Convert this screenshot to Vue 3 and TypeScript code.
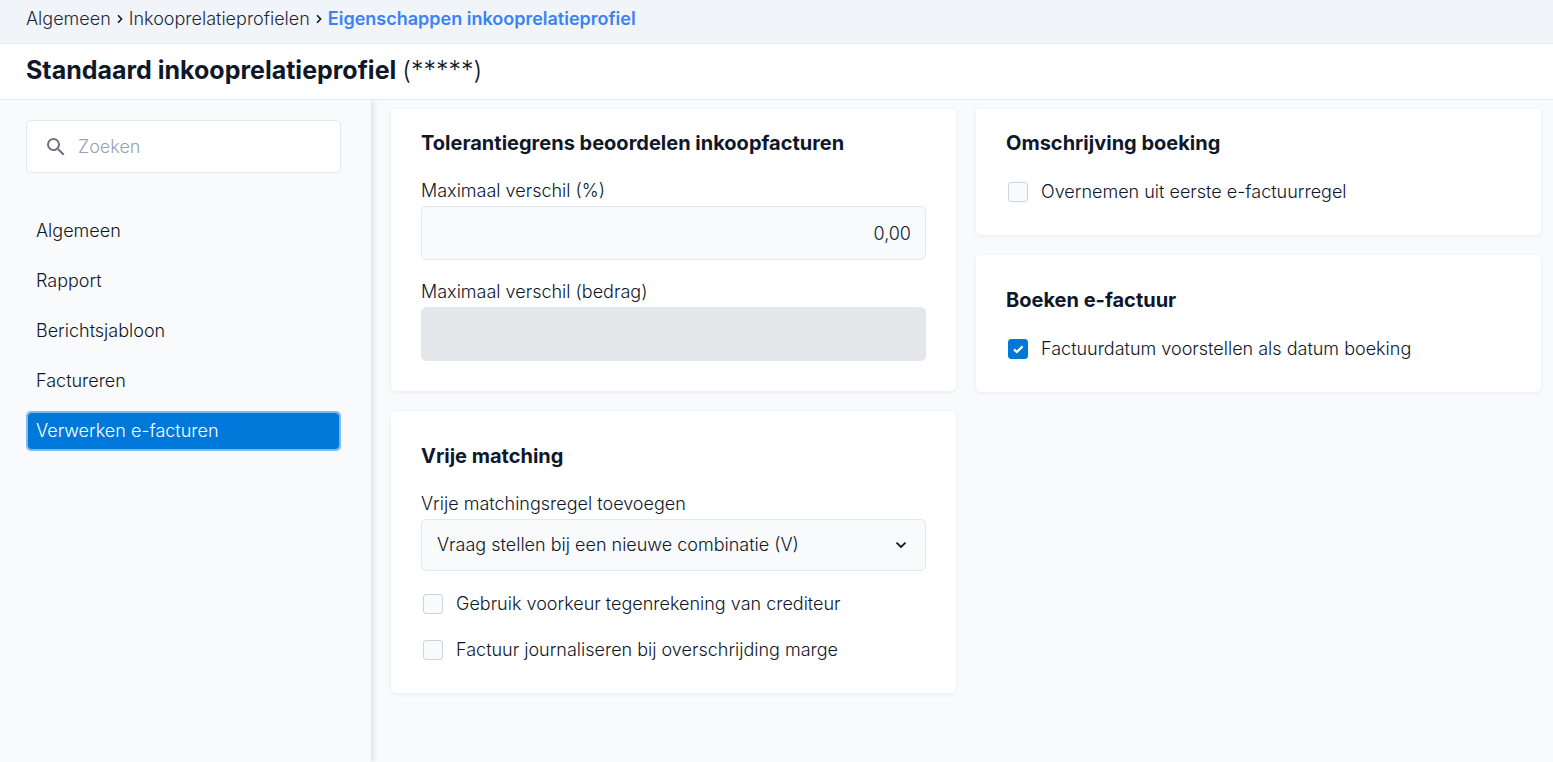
<script setup lang="ts">
import { ref } from 'vue'

const crumbs: string[] = ['Algemeen', 'Inkooprelatieprofielen']
const sections: string[] = ['Algemeen', 'Rapport', 'Berichtsjabloon', 'Factureren', 'Verwerken e-facturen']
const matchOptions: string[] = ['Vraag stellen bij een nieuwe combinatie (V)']

const active = ref<string>('Verwerken e-facturen')
const query = ref<string>('')
const maxPercentage = ref<string>('0,00')
const maxAmount = ref<string>('')
const matchOption = ref<string>(matchOptions[0])
const usePreferred = ref<boolean>(false)
const journalise = ref<boolean>(false)
const copyDescription = ref<boolean>(false)
const suggestDate = ref<boolean>(true)
</script>

<template>
  <div class="page">
    <nav class="breadcrumb" aria-label="Kruimelpad">
      <template v-for="crumb in crumbs" :key="crumb">
        <a class="crumb" href="#">{{ crumb }}</a>
        <svg class="separator" viewBox="0 0 18 18" aria-hidden="true">
          <path d="M7 5.2 L10.6 9 L7 12.8" />
        </svg>
      </template>
      <a class="crumb current" href="#" aria-current="page">Eigenschappen inkooprelatieprofiel</a>
    </nav>

    <header class="title-bar">
      <h1>Standaard inkooprelatieprofiel <span class="code">(*****)</span></h1>
    </header>

    <div class="body">
      <aside class="sidebar">
        <label class="search">
          <svg class="search-icon" viewBox="0 0 24 24" aria-hidden="true">
            <path d="M15.5 14h-.79l-.28-.27A6.47 6.47 0 0 0 16 9.5 6.5 6.5 0 1 0 9.5 16c1.61 0 3.09-.59 4.23-1.57l.27.28v.79l5 4.99L20.49 19l-4.99-5zm-6 0C7.01 14 5 11.99 5 9.5S7.01 5 9.5 5 14 7.01 14 9.5 11.99 14 9.5 14z" />
          </svg>
          <input v-model="query" type="text" placeholder="Zoeken" aria-label="Zoeken" />
        </label>
        <nav class="menu">
          <button
            v-for="section in sections"
            :key="section"
            type="button"
            class="menu-item"
            :class="{ active: section === active }"
            @click="active = section"
          >{{ section }}</button>
        </nav>
      </aside>

      <main class="content">
        <div class="column">
          <section class="card first">
            <h2>Tolerantiegrens beoordelen inkoopfacturen</h2>
            <div class="fields">
              <div class="field">
                <label for="max-percentage">Maximaal verschil (%)</label>
                <input id="max-percentage" v-model="maxPercentage" class="control number" type="text" />
              </div>
              <div class="field">
                <label for="max-amount">Maximaal verschil (bedrag)</label>
                <input id="max-amount" v-model="maxAmount" class="control number" type="text" disabled />
              </div>
            </div>
          </section>

          <section class="card">
            <h2>Vrije matching</h2>
            <div class="fields">
              <div class="field">
                <label for="match-rule">Vrije matchingsregel toevoegen</label>
                <div class="select-wrap">
                  <select id="match-rule" v-model="matchOption" class="control">
                    <option v-for="option in matchOptions" :key="option" :value="option">{{ option }}</option>
                  </select>
                  <svg class="chevron" viewBox="0 0 20 20" aria-hidden="true">
                    <path d="M5.5 7.7 L10 12 L14.5 7.7" />
                  </svg>
                </div>
              </div>
              <label class="check"><input v-model="usePreferred" type="checkbox" /><span>Gebruik voorkeur tegenrekening van crediteur</span></label>
              <label class="check"><input v-model="journalise" type="checkbox" /><span>Factuur journaliseren bij overschrijding marge</span></label>
            </div>
          </section>
        </div>

        <div class="column">
          <section class="card first">
            <h2>Omschrijving boeking</h2>
            <label class="check"><input v-model="copyDescription" type="checkbox" /><span>Overnemen uit eerste e-factuurregel</span></label>
          </section>

          <section class="card">
            <h2>Boeken e-factuur</h2>
            <label class="check"><input v-model="suggestDate" type="checkbox" /><span>Factuurdatum voorstellen als datum boeking</span></label>
          </section>
        </div>
      </main>
    </div>
  </div>
</template>

<style>
body {
  margin: 0;
  background: #f8fafc;
}
</style>

<style scoped>
.page,
.page * {
  box-sizing: border-box;
}

.page {
  display: flex;
  flex-direction: column;
  min-height: 100vh;
  background: #f8fafc;
  color: #0f172a;
  font-family: Inter, "Liberation Sans", sans-serif;
  font-size: 18px;
  font-weight: 340;
  line-height: 24px;
}

input,
select,
button {
  font: inherit;
  color: inherit;
}

.breadcrumb {
  display: flex;
  align-items: center;
  height: 44px;
  padding: 0 26px 6px;
  border-bottom: 1px solid #e2e8f0;
  background: #f1f5f9;
}

.crumb {
  color: #1e293b;
  text-decoration: none;
}

.crumb.current {
  color: #3b82f6;
  font-weight: 600;
}

.separator {
  width: 18px;
  height: 18px;
  fill: none;
  stroke: #0f172a;
  stroke-width: 1.6;
}

.title-bar {
  padding: 10px 26px 13px;
  border-bottom: 1px solid #e2e8f0;
  background: #fff;
}

h1 {
  margin: 0;
  font-size: 25px;
  line-height: 32px;
  font-weight: 700;
}

.code {
  font-weight: 340;
}

.body {
  display: flex;
  flex: 1;
}

.sidebar {
  flex: 0 0 371px;
  min-width: 0;
  padding: 20px 30px 20px 26px;
  box-shadow: 2px 0 6px rgba(15, 23, 42, 0.12);
  clip-path: inset(0 -10px 0 0);
}

.search {
  display: flex;
  align-items: center;
  gap: 10px;
  height: 53px;
  padding: 0 16px 0 17px;
  border: 1px solid #e2e8f0;
  border-radius: 5px;
  background: #fff;
}

.search-icon {
  flex: none;
  width: 24px;
  height: 24px;
  fill: #6b7280;
}

.search input {
  flex: 1;
  min-width: 0;
  padding: 0;
  border: 0;
  outline: 0;
  background: transparent;
}

.search input::placeholder {
  color: #94a3b8;
  opacity: 1;
}

.menu {
  display: flex;
  flex-direction: column;
  gap: 10px;
  margin-top: 38px;
}

.menu-item {
  height: 40px;
  padding: 0 8px;
  border: 2px solid transparent;
  border-radius: 5px;
  background: transparent;
  text-align: left;
  cursor: pointer;
}

.menu-item.active {
  border-color: #80bbeb;
  background: #0078d9;
  background-clip: padding-box;
  color: #fff;
}

.content {
  display: grid;
  flex: 1;
  grid-template-columns: 1fr 1fr;
  align-items: start;
  gap: 20px;
  min-width: 0;
  padding: 9px 12px 20px 20px;
}

.column {
  display: flex;
  flex-direction: column;
  gap: 20px;
  min-width: 0;
}

.card {
  padding: 30px;
  border-radius: 5px;
  background: #fff;
  box-shadow: 0 1px 4px rgba(15, 23, 42, 0.07);
}

.card.first {
  padding-top: 19px;
  border-radius: 0 0 5px 5px;
}

h2 {
  margin: 0 0 21px;
  font-size: 20px;
  line-height: 30px;
  font-weight: 700;
}

.fields {
  display: flex;
  flex-direction: column;
  gap: 20px;
}

.field {
  display: flex;
  flex-direction: column;
  gap: 3px;
}

.control {
  width: 100%;
  height: 54px;
  padding: 0 14px;
  border: 1px solid #e2e8f0;
  border-radius: 5px;
  background: #f8fafc;
}

.control:disabled {
  background: #e5e7eb;
}

.number {
  text-align: right;
}

.select-wrap {
  position: relative;
}

select.control {
  display: block;
  height: 52px;
  padding: 0 40px 0 15px;
  appearance: none;
}

.chevron {
  position: absolute;
  top: 16px;
  right: 15px;
  width: 20px;
  height: 20px;
  fill: none;
  stroke: #0f172a;
  stroke-width: 1.8;
  pointer-events: none;
}

.check {
  display: flex;
  align-items: center;
  gap: 13px;
  height: 26px;
  padding-left: 2px;
}

.check input {
  display: grid;
  flex: none;
  width: 20px;
  height: 20px;
  margin: 0;
  border: 1px solid #cbd5e1;
  border-radius: 3px;
  background: #f8fafc;
  appearance: none;
}

.check input:checked {
  border-color: #0078d9;
  background: #0078d9 url("data:image/svg+xml,%3Csvg xmlns='http://www.w3.org/2000/svg' viewBox='0 0 20 20'%3E%3Cpath d='M6 10.4 L8.8 13 L14.6 7.4' fill='none' stroke='white' stroke-width='2.2'/%3E%3C/svg%3E") center / 20px 20px no-repeat;
}
</style>
